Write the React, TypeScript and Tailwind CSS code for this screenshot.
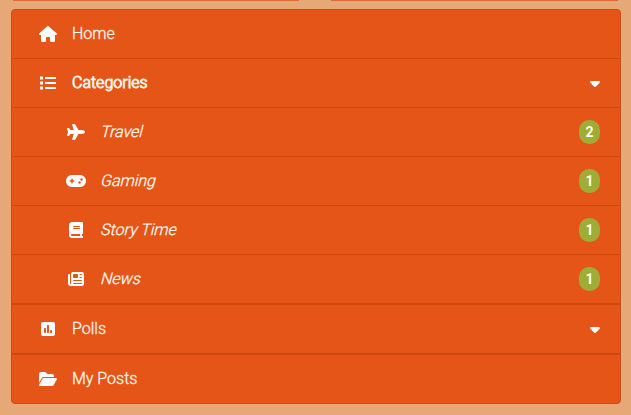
import type { ReactNode } from "react";
import { FaList } from "react-icons/fa";
import { FaHouse, FaPlane, FaGamepad, FaBook, FaNewspaper, FaSquarePollVertical, FaFolderOpen, FaCaretDown } from "react-icons/fa6";

type RowProps = { icon: ReactNode; label: string; kind?: "main" | "active" | "sub"; count?: number; caret?: boolean; className?: string };

function Row({ icon, label, kind = "main", count, caret, className = "h-[49px] border-b" }: RowProps) {
  const sub = kind === "sub";
  return (
    <li className={`flex items-center border-[#cb4911] pr-5 ${sub ? "pl-[52px]" : "pl-6"} ${className}`}>
      <span className="flex w-[23px] shrink-0 justify-center text-white">{icon}</span>
      <span className={`ml-[13px] font-light leading-6 text-[#fffaf0] ${sub ? "origin-[50%_70%] -skew-x-[14deg]" : ""} ${kind === "active" ? "[-webkit-text-stroke:0.9px_#fff4ea]" : "[-webkit-text-stroke:0.3px_#fffaf0]"}`}>{label}</span>
      {count !== undefined && (
        <span className="ml-auto flex h-6 w-[21px] items-center justify-center rounded-[10px] bg-[#9dad35] text-[14px] font-bold text-[#fffbe8]">{count}</span>
      )}
      {caret && <FaCaretDown className="ml-auto mr-[-3px] text-white" size={16} />}
    </li>
  );
}

export default function App() {
  return (
    <div className="flex h-[415px] w-[631px] flex-col overflow-hidden bg-[#e7a878] pl-[11px] font-[Roboto,sans-serif] text-[16px]">
      <div className="flex h-[1px] shrink-0 gap-8 pl-[2px]">
        <div className="w-[286px] bg-[#dc6b36]" />
        <div className="w-[287px] bg-[#dc6b36]" />
      </div>
      <nav className="mt-2 h-[395px] w-[610px] shrink-0 overflow-hidden rounded-[4px] border border-[#c94d19] bg-[#e65518]">
        <ul>
          <Row icon={<FaHouse size={16} className="w-[18px]" />} label="Home" />
          <Row icon={<FaList size={16} />} label="Categories" kind="active" caret />
          <Row icon={<FaPlane size={16} className="w-[18px]" />} label="Travel" kind="sub" count={2} />
          <Row icon={<FaGamepad size={16} className="w-5" />} label="Gaming" kind="sub" count={1} />
          <Row icon={<FaBook size={16} />} label="Story Time" kind="sub" count={1} />
          <Row icon={<FaNewspaper size={16} />} label="News" kind="sub" count={1} className="h-[50px] border-b-2" />
          <Row icon={<FaSquarePollVertical size={16} />} label="Polls" caret className="h-[50px] border-b-2" />
          <Row icon={<FaFolderOpen size={16} className="w-[18px]" />} label="My Posts" className="h-12" />
        </ul>
      </nav>
    </div>
  );
}
